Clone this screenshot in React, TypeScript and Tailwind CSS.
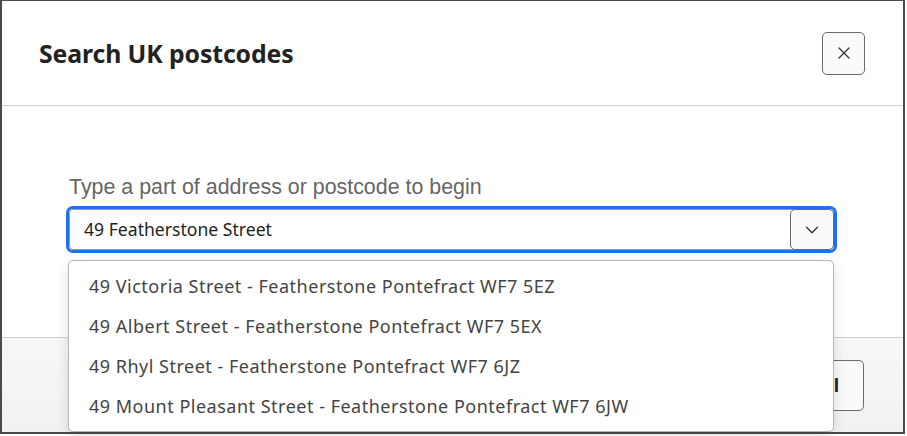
import { X, ChevronDown } from "lucide-react";

const items = [
  "49 Victoria Street - Featherstone Pontefract WF7 5EZ",
  "49 Albert Street - Featherstone Pontefract WF7 5EX",
  "49 Rhyl Street - Featherstone Pontefract WF7 6JZ",
  "49 Mount Pleasant Street - Featherstone Pontefract WF7 6JW",
];

const plex = "font-['Noto_Sans',sans-serif]";

export default function App() {
  return (
    <div className="w-[907px] h-[436px] overflow-hidden bg-white">
      <div className="relative flex flex-col w-[905px] h-[434px] border-2 border-[#4a4a4a] border-t border-l-2">
        {/* header */}
        <div className="flex items-center justify-between h-[105px] pl-[37px] pr-[38px] border-b border-[#cfcfcf]">
          <h2 className={`${plex} text-[24.8px] font-bold text-[#222] tracking-[-0.1px] mt-[2px]`}>Search UK postcodes</h2>
          <button
            type="button"
            className="flex items-center justify-center w-[43px] h-[43px] rounded-[5px] border border-[#6b6b6b] bg-[#fafafa] text-[#333]"
          >
            <X size={20} strokeWidth={1.5} />
          </button>
        </div>

        {/* body */}
        <div className="flex-1 px-[64px] pt-[69px]">
          <label className="block pl-[3px] font-['Liberation_Sans',sans-serif] text-[21.4px] text-[#666] leading-[24px]">
            Type a part of address or postcode to begin
          </label>
          <div className="relative mt-[7px] w-[771px]">
            <div className="flex items-center h-[47px] rounded-[7px] border-[3px] border-[#1f6ff0] p-0">
              <div className="flex items-center flex-1 h-full rounded-[4px] border border-[#9a9a9a] bg-white">
                <span className={`${plex} flex-1 pl-[14px] text-[17.6px] text-[#1e1e1e]`}>49 Featherstone Street</span>
                <button
                  type="button"
                  className="flex items-center justify-center w-[44px] h-[41px] -mr-px rounded-[5px] border border-[#6b6b6b] bg-[#fafafa] text-[#333]"
                >
                  <ChevronDown size={22} strokeWidth={1.4} />
                </button>
              </div>
            </div>

            {/* dropdown */}
            <ul className="absolute z-10 left-[2px] top-[54px] w-[766px] rounded-[5px] border border-[#b5b5b5] bg-white py-[5px] shadow-[0_4px_14px_rgba(0,0,0,0.12)]">
              {items.map((item) => (
                <li
                  key={item}
                  className={`${plex} h-[40px] flex items-center pl-[20px] text-[18px] tracking-[0.5px] text-[#444]`}
                >
                  {item}
                </li>
              ))}
            </ul>
          </div>
        </div>

        {/* footer */}
        <div className="flex items-center justify-end h-[95px] pr-[39px] border-t border-[#cfcfcf] bg-gradient-to-b from-[#f7f7f7] to-[#f1f1f1]">
          <button
            type="button"
            className={`${plex} h-[51px] px-[24px] rounded-[5px] border border-[#6b6b6b] bg-[#fafafa] text-[18px] font-bold text-[#222]`}
          >
            Cancel
          </button>
        </div>
      </div>
    </div>
  );
}
